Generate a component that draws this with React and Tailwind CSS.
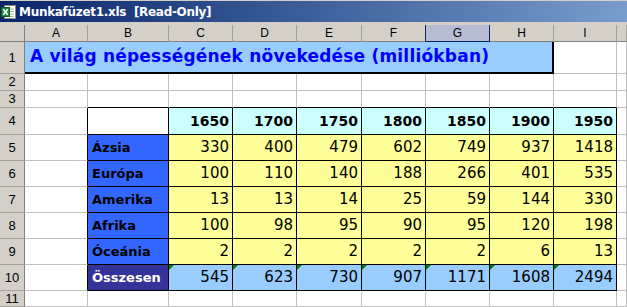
const COLS = ["A", "B", "C", "D", "E", "F", "G", "H", "I", ""];
const YEARS = ["1650", "1700", "1750", "1800", "1850", "1900", "1950"];
const DATA = [
  ["Ázsia", [330, 400, 479, 602, 749, 937, 1418]],
  ["Európa", [100, 110, 140, 188, 266, 401, 535]],
  ["Amerika", [13, 13, 14, 25, 59, 144, 330]],
  ["Afrika", [100, 98, 95, 90, 95, 120, 198]],
  ["Óceánia", [2, 2, 2, 2, 2, 6, 13]],
];
const TOTAL = [545, 623, 730, 907, 1171, 1608, 2494];

const FONT = "font-['DejaVu_Sans',sans-serif]";

function Cell({ r = "g", b = "g", className = "", children }) {
  const rc = r === "k" ? "border-r-black" : "border-r-[#c0c0c0]";
  const bc = b === "k" ? "border-b-black" : "border-b-[#c0c0c0]";
  return <div className={`border-r border-b ${rc} ${bc} ${className}`}>{children}</div>;
}

function RowHead({ n }) {
  return (
    <div className="bg-[#d4d0c8] border-r border-b border-r-[#808080] border-b-[#a5a29a] flex items-center justify-center text-[13px] text-black font-['Liberation_Sans',Arial,sans-serif]">
      {n}
    </div>
  );
}

function ExcelIcon() {
  return (
    <svg width="16" height="16" viewBox="0 0 16 16" className="shrink-0">
      <rect x="3.5" y="1.5" width="11" height="13" fill="#ffffff" stroke="#8a8a8a" />
      <path d="M6 5h7M6 7.5h7M6 10h7M6 12.5h7" stroke="#9bbf9b" strokeWidth="1" />
      <rect x="0.5" y="3.5" width="8" height="9" fill="#1f8a3a" stroke="#0d5a22" />
      <path d="M2.3 5.3l4.4 5.4M6.7 5.3l-4.4 5.4" stroke="#ffffff" strokeWidth="1.6" />
    </svg>
  );
}

export default function App() {
  const cells = [];

  // column headers
  cells.push(<div key="corner" className="bg-[#d4d0c8] border-r border-b border-r-[#808080] border-b-[#808080]" />);
  COLS.forEach((c, i) => {
    const sel = c === "G";
    const nav = c === "F" || c === "G";
    cells.push(
      <div
        key={"h" + i}
        className={`${sel ? "bg-[#b6bdd2]" : "bg-[#d4d0c8]"} border-r border-b ${nav ? "border-r-[#0a246a]" : "border-r-[#a5a29a]"} ${sel ? "border-b-[#0a246a]" : "border-b-[#808080]"} flex items-center justify-center text-[12px] text-black font-['Liberation_Sans',Arial,sans-serif]`}
      >
        {c}
      </div>
    );
  });

  // row 1
  cells.push(<RowHead key="r1" n={1} />);
  cells.push(
    <div
      key="title"
      className={`col-span-8 bg-[#99ccff] border-r-2 border-b-2 border-black flex items-center pl-[5px] text-[17px] font-bold text-[#0000ff] tracking-[0.2px] ${FONT}`}
    >
      A világ népességének növekedése (milliókban)
    </div>
  );
  cells.push(<Cell key="i1" />);
  cells.push(<Cell key="j1" />);

  // rows 2-3
  [2, 3].forEach((n) => {
    cells.push(<RowHead key={"r" + n} n={n} />);
    COLS.forEach((c, i) => {
      const under = n === 3 && i >= 1 && i <= 8;
      cells.push(<Cell key={n + "-" + i} b={under ? "k" : "g"} />);
    });
  });

  // row 4
  cells.push(<RowHead key="r4" n={4} />);
  cells.push(<Cell key="a4" r="k" />);
  cells.push(<Cell key="b4" r="k" b="k" className="bg-white" />);
  YEARS.forEach((y) => {
    cells.push(
      <Cell key={"y" + y} r="k" b="k" className={`bg-[#ccffff] flex items-center justify-end pr-[3px] text-[14px] font-bold text-black ${FONT}`}>
        {y}
      </Cell>
    );
  });
  cells.push(<Cell key="j4" />);

  // rows 5-9
  DATA.forEach(([label, vals], ri) => {
    const n = ri + 5;
    cells.push(<RowHead key={"r" + n} n={n} />);
    cells.push(<Cell key={"a" + n} r="k" />);
    cells.push(
      <Cell key={"b" + n} r="k" b="k" className={`bg-[#3366ff] flex items-center pl-[4px] text-[13px] font-bold text-black ${FONT}`}>
        {label}
      </Cell>
    );
    vals.forEach((v, vi) => {
      cells.push(
        <Cell key={n + "v" + vi} r="k" b="k" className={`bg-[#ffff99] flex items-center justify-end pr-[3px] text-[15px] text-black ${FONT}`}>
          {v}
        </Cell>
      );
    });
    cells.push(<Cell key={"j" + n} />);
  });

  // row 10
  cells.push(<RowHead key="r10" n={10} />);
  cells.push(<Cell key="a10" r="k" />);
  cells.push(
    <Cell key="b10" r="k" b="k" className={`bg-[#333399] flex items-center pl-[4px] text-[13px] font-bold text-white ${FONT}`}>
      Összesen
    </Cell>
  );
  TOTAL.forEach((v, vi) => {
    cells.push(
      <Cell key={"t" + vi} r="k" b="k" className={`relative bg-[#99ccff] flex items-center justify-end pr-[3px] text-[15px] text-black ${FONT}`}>
        <span className="absolute top-0 left-0 w-0 h-0 border-t-[5px] border-t-[#008000] border-r-[5px] border-r-transparent" />
        {v}
      </Cell>
    );
  });
  cells.push(<Cell key="j10" />);

  // row 11
  cells.push(<RowHead key="r11" n={11} />);
  COLS.forEach((c, i) => cells.push(<Cell key={"11-" + i} />));

  return (
    <div className="w-[627px] h-[307px] overflow-hidden bg-white">
      <div className="h-[1px] bg-[#d4d0c8]" />
      <div className="h-[21px] flex items-center gap-[2px] pl-[1px] bg-gradient-to-r from-[#0a246a] to-[#7a9ccc]">
        <ExcelIcon />
        <span className="text-white font-bold text-[12px] whitespace-pre font-['DejaVu_Sans',sans-serif] tracking-[-0.3px]">
          Munkafüzet1.xls  [Read-Only]
        </span>
      </div>
      <div className="h-[3px] bg-[#d4d0c8]" />
      <div className="grid grid-cols-[25px_63px_81px_64px_64px_65px_64px_64px_64px_63px_1fr] grid-rows-[17px_32px_17px_17px_27px_26px_26px_26px_26px_26px_26px_16px]">
        {cells}
      </div>
    </div>
  );
}
